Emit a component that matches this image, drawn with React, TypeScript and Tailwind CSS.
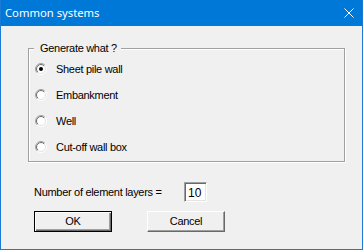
// Windows-style "Common systems" dialog.

const options = ["Sheet pile wall", "Embankment", "Well", "Cut-off wall box"];

function Radio({ checked }: { checked: boolean }) {
  return (
    <svg width="12" height="12" viewBox="0 0 12 12" className="shrink-0">
      <defs>
        <linearGradient id="ro" x1="0" y1="0" x2="1" y2="1">
          <stop offset="0.45" stopColor="#a0a0a0" />
          <stop offset="0.55" stopColor="#ffffff" />
        </linearGradient>
        <linearGradient id="ri" x1="0" y1="0" x2="1" y2="1">
          <stop offset="0.45" stopColor="#696969" />
          <stop offset="0.55" stopColor="#e3e3e3" />
        </linearGradient>
      </defs>
      <circle cx="6" cy="6" r="5.5" fill="none" stroke="url(#ro)" strokeWidth="1" />
      <circle cx="6" cy="6" r="4.5" fill="#ffffff" stroke="url(#ri)" strokeWidth="1" />
      {checked && <circle cx="6" cy="6" r="2" fill="#000000" />}
    </svg>
  );
}

function Button({ label, isDefault }: { label: string; isDefault?: boolean }) {
  return (
    <button
      className={
        "h-[21px] w-[78px] bg-[#f0f0f0] text-[11px] tracking-[-0.3px] text-black " +
        (isDefault
          ? "border border-black shadow-[inset_1px_1px_0_#ffffff,inset_-1px_-1px_0_#696969,inset_-2px_-2px_0_#a0a0a0]"
          : "border-t border-l border-white border-r border-b border-r-[#696969] border-b-[#696969] shadow-[inset_-1px_-1px_0_#a0a0a0]")
      }
    >
      {label}
    </button>
  );
}

export default function App() {
  return (
    <div className="w-[364px] h-[250px] bg-white font-['Liberation_Sans',Arial,sans-serif]">
      <div className="w-[363px] h-[250px] flex flex-col bg-[#f0f0f0] border-l border-r border-b border-[#1a7ad6]">
        {/* Title bar */}
        <div className="h-[26px] shrink-0 flex items-center justify-between bg-[#0078d7] pl-[4px] pr-[8px]">
          <span className="text-[11.25px] text-white font-['Noto_Sans',sans-serif] leading-none">
            Common systems
          </span>
          <svg width="10" height="10" viewBox="0 0 10 10">
            <path d="M0.5 0.5 L9.5 9.5 M9.5 0.5 L0.5 9.5" stroke="#ffffff" strokeWidth="1" />
          </svg>
        </div>

        {/* Body */}
        <div className="flex flex-col text-[11px] tracking-[-0.3px] text-black">
          <fieldset className="ml-[27px] mt-[16px] w-[317px] border border-[#a0a0a0] shadow-[1px_1px_0_#ffffff,inset_1px_1px_0_#ffffff]">
            <legend className="ml-[5px] pl-[6px] pr-[4px] leading-[13px] bg-[#f0f0f0]">
              Generate what ?
            </legend>
            <div className="flex flex-col mt-[1px] mb-[1px]">
              {options.map((o, i) => (
                <div key={o} className="h-[26px] flex items-center pl-[6px] gap-[9px]">
                  <Radio checked={i === 0} />
                  <span>{o}</span>
                </div>
              ))}
            </div>
          </fieldset>

          <div className="mt-[20px] ml-[33px] h-[20px] flex items-center">
            <span className="w-[150px]">Number of element layers =</span>
            <div className="h-[20px] w-[23px] bg-white border-t border-l border-[#a0a0a0] border-r border-b border-r-white border-b-white shadow-[inset_1px_1px_0_#696969,inset_-1px_-1px_0_#e3e3e3] pl-[3px] pt-[1px] flex items-center text-[12px] tracking-normal">
              10
            </div>
          </div>

          <div className="mt-[9px] ml-[33px] flex gap-[35px]">
            <Button label="OK" isDefault />
            <Button label="Cancel" />
          </div>
        </div>
      </div>
    </div>
  );
}
